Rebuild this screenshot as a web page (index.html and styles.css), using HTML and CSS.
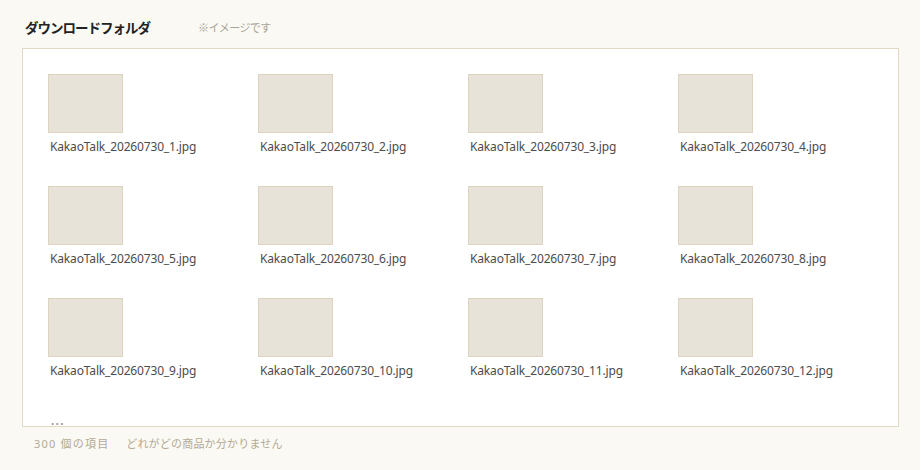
FILE: index.html
```html
<!DOCTYPE html>
<html lang="ja">
<head>
  <meta charset="UTF-8">
  <meta name="viewport" content="width=device-width, initial-scale=1.0">
  <title>ダウンロードフォルダ</title>
  <link rel="stylesheet" href="styles.css">
</head>
<body>
  <div class="page">
    <div class="folder-header">
      <h1 class="folder-title">ダウンロードフォルダ</h1>
      <span class="folder-note">※イメージです</span>
    </div>

    <div class="folder-box">
      <div class="file-grid">
        <div class="file-item"><div class="thumb"></div><div class="file-name">KakaoTalk_20260730_1.jpg</div></div>
        <div class="file-item"><div class="thumb"></div><div class="file-name">KakaoTalk_20260730_2.jpg</div></div>
        <div class="file-item"><div class="thumb"></div><div class="file-name">KakaoTalk_20260730_3.jpg</div></div>
        <div class="file-item"><div class="thumb"></div><div class="file-name">KakaoTalk_20260730_4.jpg</div></div>
        <div class="file-item"><div class="thumb"></div><div class="file-name">KakaoTalk_20260730_5.jpg</div></div>
        <div class="file-item"><div class="thumb"></div><div class="file-name">KakaoTalk_20260730_6.jpg</div></div>
        <div class="file-item"><div class="thumb"></div><div class="file-name">KakaoTalk_20260730_7.jpg</div></div>
        <div class="file-item"><div class="thumb"></div><div class="file-name">KakaoTalk_20260730_8.jpg</div></div>
        <div class="file-item"><div class="thumb"></div><div class="file-name">KakaoTalk_20260730_9.jpg</div></div>
        <div class="file-item"><div class="thumb"></div><div class="file-name">KakaoTalk_20260730_10.jpg</div></div>
        <div class="file-item"><div class="thumb"></div><div class="file-name">KakaoTalk_20260730_11.jpg</div></div>
        <div class="file-item"><div class="thumb"></div><div class="file-name">KakaoTalk_20260730_12.jpg</div></div>
      </div>
      <div class="more">...</div>
    </div>

    <div class="folder-footer">
      <span class="item-count">300 個の項目</span>
      <span class="footer-hint">どれがどの商品か分かりません</span>
    </div>
  </div>
</body>
</html>
```

FILE: styles.css
```css
* {
  margin: 0;
  padding: 0;
  box-sizing: border-box;
}

body {
  background-color: #faf9f4;
  font-family: "Noto Sans", "Noto Sans CJK JP", sans-serif;
  width: 920px;
  height: 470px;
  overflow: hidden;
}

.page {
  padding: 17px 21px 0 22px;
}

.folder-header {
  display: flex;
  align-items: center;
  height: 20px;
  padding-left: 3px;
}

.folder-title {
  font-family: "Noto Sans CJK JP", sans-serif;
  font-size: 13.5px;
  font-weight: 700;
  letter-spacing: -1px;
  color: #222;
  width: 173px;
}

.folder-note {
  font-family: "Noto Sans CJK JP", sans-serif;
  font-size: 11px;
  letter-spacing: -0.6px;
  color: #a9a498;
}

.folder-box {
  margin-top: 11px;
  width: 877px;
  height: 379px;
  background-color: #fff;
  border: 1px solid #e2d8c4;
  padding: 25px 0 0 25px;
}

.file-grid {
  display: grid;
  grid-template-columns: repeat(4, 210px);
  row-gap: 31px;
}

.file-item {
  display: flex;
  flex-direction: column;
  align-items: flex-start;
}

.thumb {
  width: 75px;
  height: 59px;
  background-color: #e7e3d9;
  border: 1px solid #ddd3bf;
}

.file-name {
  margin-top: 6px;
  padding-left: 2px;
  font-size: 12px;
  line-height: 16px;
  letter-spacing: -0.16px;
  color: #4c4c4c;
}

.more {
  margin-top: 34px;
  padding-left: 3px;
  font-size: 12px;
  line-height: 16px;
  font-weight: 700;
  letter-spacing: 1.2px;
  color: #a09a90;
}

.folder-footer {
  margin-top: 9px;
  padding-left: 12px;
  font-size: 11px;
  line-height: 16px;
  color: #b3a993;
}

.item-count {
  letter-spacing: 1.2px;
}

.footer-hint {
  margin-left: 14px;
  letter-spacing: 0.2px;
}
```
